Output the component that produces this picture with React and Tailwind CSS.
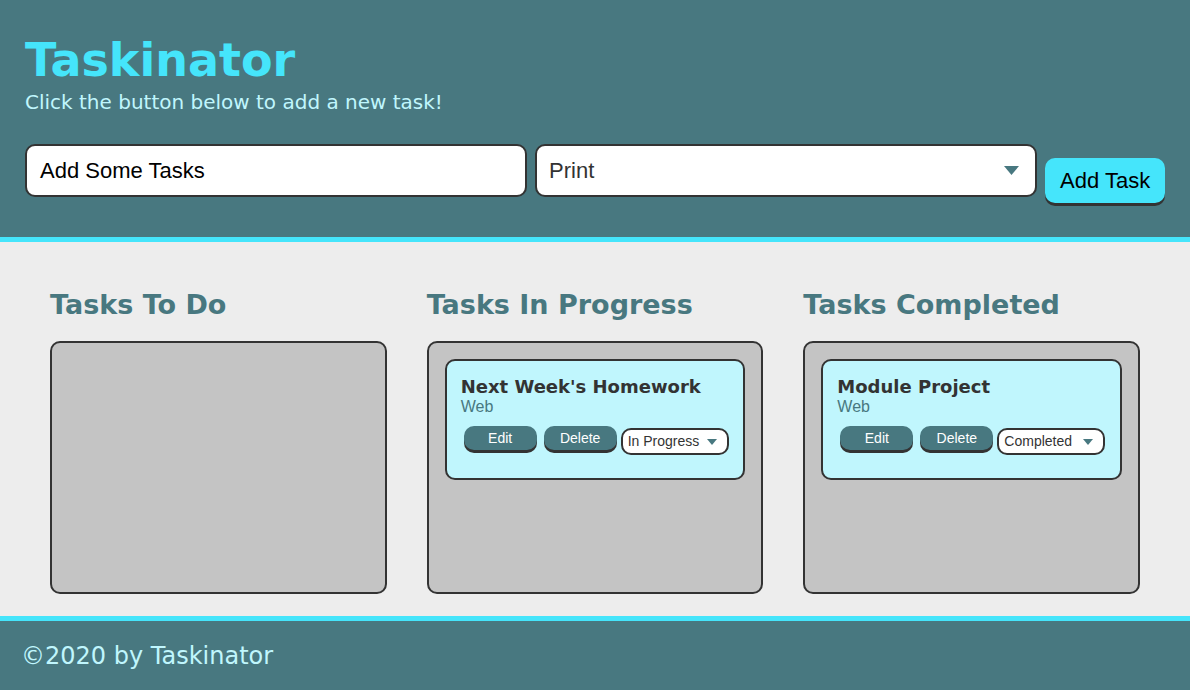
// App.jsx - Taskinator board

const TEAL = '#487880'

function Caret({ className = '' }) {
  return (
    <svg className={className} viewBox="0 0 10 6" fill={TEAL}>
      <path d="M0 0h10L5 6z" />
    </svg>
  )
}

function TaskCard({ title, type, status }) {
  return (
    <div className="mx-4 mt-4 rounded-[10px] border-2 border-[#333] bg-[#c0f6fd] px-[14px] pt-[15px] pb-[23px]">
      <h3 className="text-[18px] font-bold leading-[22px] text-[#333] font-['DejaVu_Sans',sans-serif]">{title}</h3>
      <p className="text-[16px] leading-[18px] text-[#487880] font-['Liberation_Sans',sans-serif]">{type}</p>
      <div className="mt-[10px] flex items-start gap-[7px] pl-[3px] font-['Liberation_Sans',sans-serif]">
        <button className="h-[24px] w-[73px] rounded-[10px] bg-[#487880] text-[14px] text-white shadow-[0_3px_0_#333]">Edit</button>
        <button className="h-[24px] w-[73px] rounded-[10px] bg-[#487880] text-[14px] text-white shadow-[0_3px_0_#333]">Delete</button>
        <div className="-ml-[3px] mt-[2px] flex h-[27px] w-[108px] items-center justify-between rounded-[10px] border-2 border-[#333] bg-white pl-[5px] pr-[10px] text-[14px] text-[#333]">
          <span>{status}</span>
          <Caret className="h-[6px] w-[10px]" />
        </div>
      </div>
    </div>
  )
}

function Column({ title, children }) {
  return (
    <div className="flex flex-1 flex-col">
      <h2 className="mb-[20px] text-[27px] font-bold leading-[32px] text-[#487880] font-['DejaVu_Sans',sans-serif]">{title}</h2>
      <div className="h-[253px] rounded-[10px] border-2 border-[#333] bg-[#c4c4c4]">{children}</div>
    </div>
  )
}

export default function App() {
  return (
    <div className="flex h-[690px] w-[1190px] flex-col bg-[#ededed] font-['DejaVu_Sans',sans-serif]">
      {/* Header */}
      <header className="h-[242px] flex-shrink-0 border-b-[5px] border-[#45e5fb] bg-[#487880] px-[25px] pt-[32px]">
        <h1 className="text-[46px] font-bold leading-[56px] text-[#45e5fb]">Taskinator</h1>
        <p className="mt-[2px] text-[20px] leading-[24px] text-[#c0f6fd]">Click the button below to add a new task!</p>
        <div className="mt-[30px] flex items-start gap-[8px] font-['Liberation_Sans',sans-serif]">
          <div className="flex h-[53px] w-[503px] items-center rounded-[10px] border-2 border-[#333] bg-white px-[13px] text-[22px] text-black">
            Add Some Tasks
          </div>
          <div className="flex h-[53px] w-[503px] items-center justify-between rounded-[10px] border-2 border-[#333] bg-white pl-[12px] pr-[16px] text-[22px] text-[#333]">
            <span>Print</span>
            <Caret className="h-[9px] w-[15px]" />
          </div>
          <button className="mt-[14px] h-[45px] w-[120px] rounded-[10px] bg-[#45e5fb] text-[22px] text-black shadow-[0_3px_0_#333]">
            Add Task
          </button>
        </div>
      </header>

      {/* Columns */}
      <main className="flex flex-1 gap-[40px] px-[50px] pt-[47px]">
        <Column title="Tasks To Do" />
        <Column title="Tasks In Progress">
          <TaskCard title="Next Week's Homework" type="Web" status="In Progress" />
        </Column>
        <Column title="Tasks Completed">
          <TaskCard title="Module Project" type="Web" status="Completed" />
        </Column>
      </main>

      {/* Footer */}
      <footer className="h-[74px] flex-shrink-0 border-t-[5px] border-[#45e5fb] bg-[#487880] px-[21px] pt-[20px]">
        <p className="text-[24px] leading-[30px] text-[#c0f6fd]">©2020 by Taskinator</p>
      </footer>
    </div>
  )
}
